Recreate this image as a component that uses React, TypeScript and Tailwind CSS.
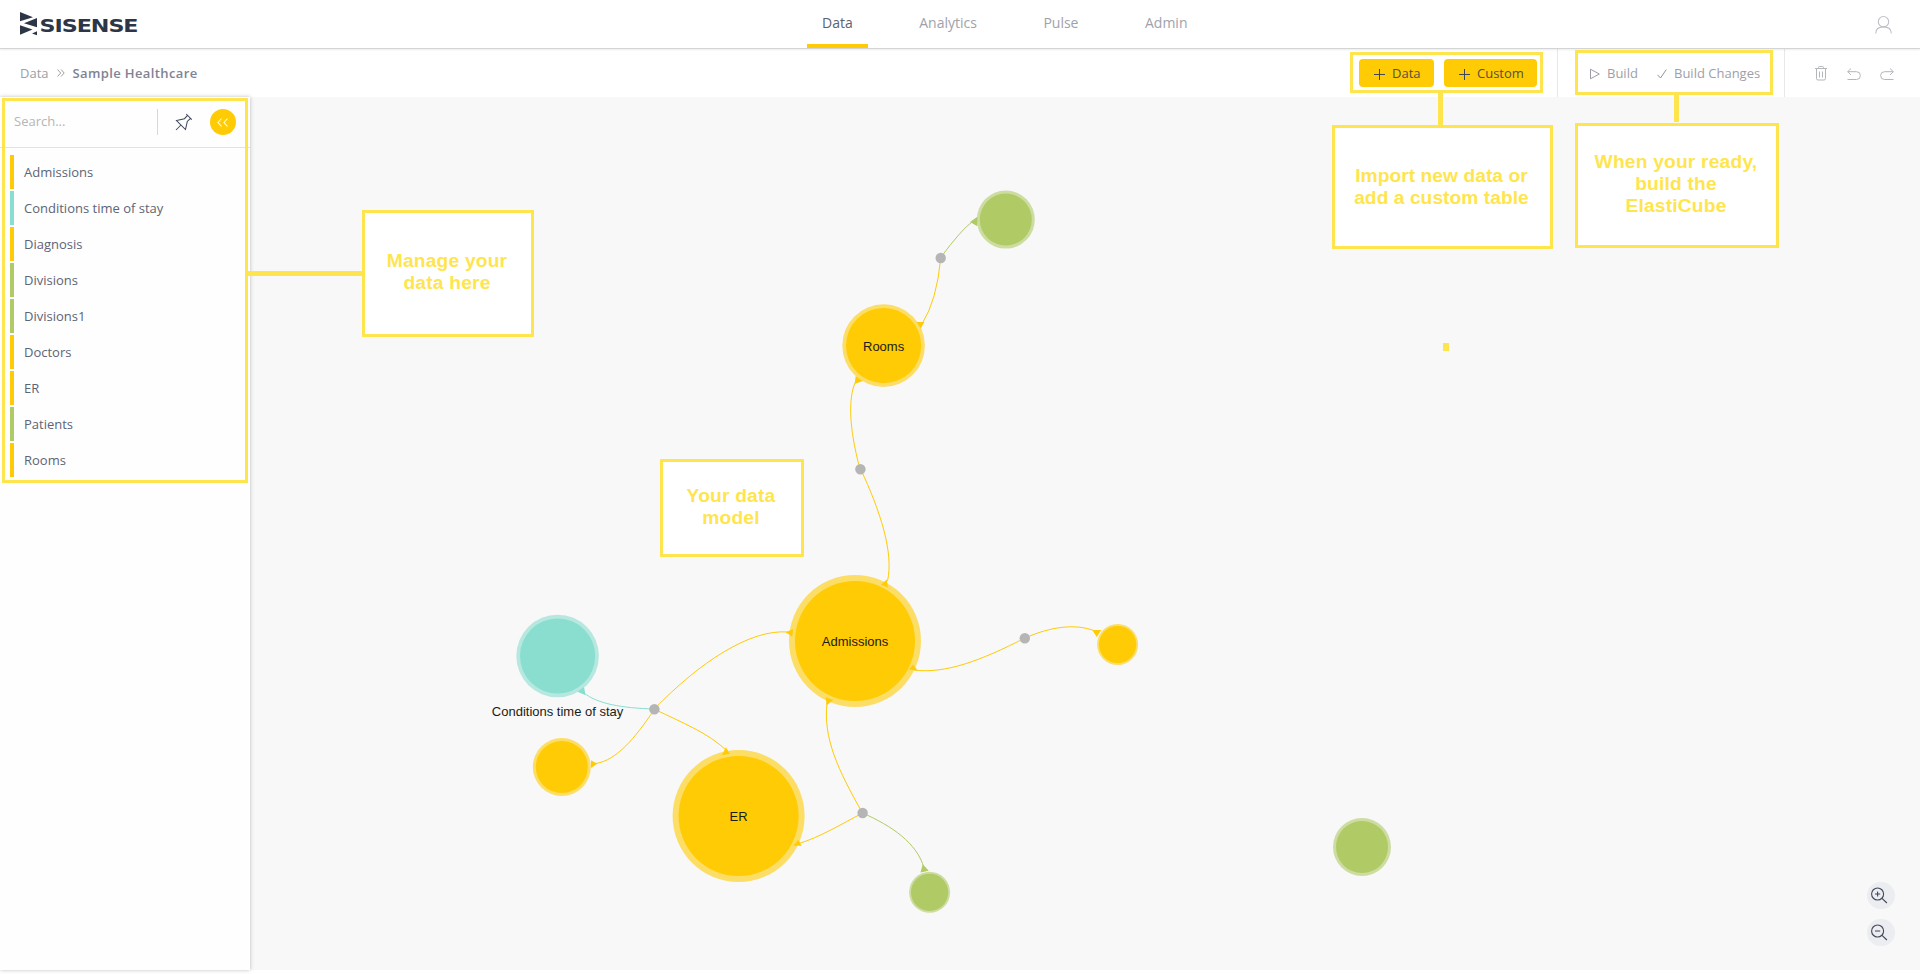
import React from "react";

const YELLOW = "#ffcb05";
const GREEN = "#b0ca65";
const TEAL = "#8adecf";

const tables = [
  { name: "Admissions", bar: "bg-[#ffcb05]" },
  { name: "Conditions time of stay", bar: "bg-[#8adecf]" },
  { name: "Diagnosis", bar: "bg-[#ffcb05]" },
  { name: "Divisions", bar: "bg-[#b0ca65]" },
  { name: "Divisions1", bar: "bg-[#b0ca65]" },
  { name: "Doctors", bar: "bg-[#ffcb05]" },
  { name: "ER", bar: "bg-[#ffcb05]" },
  { name: "Patients", bar: "bg-[#b0ca65]" },
  { name: "Rooms", bar: "bg-[#ffcb05]" },
];

type Node = { x: number; y: number; r: number; inner: number; color: string; label?: string; labelY?: number };

const nodes: Node[] = [
  { x: 1005.8, y: 219.6, r: 29, inner: 26, color: GREEN },
  { x: 883.6, y: 345.6, r: 41.3, inner: 37.6, color: YELLOW, label: "Rooms", labelY: 351 },
  { x: 557.6, y: 656, r: 41.3, inner: 37.6, color: TEAL, label: "Conditions time of stay", labelY: 716 },
  { x: 561.8, y: 767, r: 29, inner: 26, color: YELLOW },
  { x: 738.6, y: 816, r: 66, inner: 60, color: YELLOW, label: "ER", labelY: 821 },
  { x: 855, y: 641, r: 66, inner: 60, color: YELLOW, label: "Admissions", labelY: 646 },
  { x: 1117.6, y: 644.5, r: 20.5, inner: 18.6, color: YELLOW },
  { x: 929.6, y: 892.3, r: 20.5, inner: 18.6, color: GREEN },
  { x: 1362, y: 847, r: 29, inner: 26, color: GREEN },
];

const edges = [
  { d: "M941 257Q962 229 972 222", arrow: "970,222 977.3,216.8 977.3,226.3", color: GREEN },
  { d: "M940.7 258Q937 300 922 324", arrow: "916.5,322 924.3,322 920.8,328.5", color: YELLOW },
  { d: "M855 383C849 397 848 425 860 469", arrow: "855.7,376 862.8,381 854.6,384", color: YELLOW },
  { d: "M860.5 469C880 510 894 553 887.5 581", arrow: "886.7,579.5 881,584.5 888,587.5", color: YELLOW },
  { d: "M1025 638C1050 627 1075 623 1095 631", arrow: "1092.3,630 1101.3,630 1096.7,637", color: YELLOW },
  { d: "M1025 638C980 661 945 674 914 670", arrow: "913,664.5 917.7,670.6 909,669.4", color: YELLOW },
  { d: "M654.3 709C700 662 750 629 788 632", arrow: "785.7,632.2 793.2,629 792.2,636.8", color: YELLOW },
  { d: "M654 709C622 708 598 704 584 693", arrow: "584,687 577.5,691.8 585.5,695.2", color: TEAL },
  { d: "M654 710C635 738 617 760 596 763.5", arrow: "591,760.3 597.3,763.8 591,768", color: YELLOW },
  { d: "M654 709C683 723 708 733 726 750", arrow: "726,747.2 721.8,755.2 729.8,753.7", color: YELLOW },
  { d: "M827 703C823 738 838 770 862.5 813", arrow: "825.6,697.2 833.3,700 826.7,705.2", color: YELLOW },
  { d: "M862.5 813C840 825 820 837 799 843.5", arrow: "798.3,839.8 801.6,845.8 793.4,845.8", color: YELLOW },
  { d: "M862.5 813C892 826 917 843 924 868", arrow: "922.7,864.2 928.8,870.8 920.5,872.4", color: GREEN },
];

const joints = [
  [940.7, 258], [860.4, 469.2], [1024.8, 638.3], [654.4, 709.3], [862.6, 813],
];

function Graph() {
  return (
    <svg className="absolute left-0 top-0" width="1670" height="873" viewBox="250 97 1670 873" fill="none">
      {nodes.map((n, i) => (
        <g key={i}>
          <circle cx={n.x} cy={n.y} r={n.r} fill={n.color} fillOpacity="0.6" />
          <circle cx={n.x} cy={n.y} r={n.inner} fill={n.color} />
        </g>
      ))}
      {edges.map((e, i) => (
        <g key={i}>
          <path d={e.d} stroke={e.color} strokeWidth="1" />
          <polygon points={e.arrow} fill={e.color} />
        </g>
      ))}
      {joints.map(([x, y], i) => (
        <circle key={i} cx={x} cy={y} r="5.2" fill="#b5b5b5" />
      ))}
      {nodes.map((n, i) =>
        n.label ? (
          <text key={i} x={n.x} y={n.labelY} textAnchor="middle" fill="#1c1c10" className="font-['Liberation_Sans',sans-serif] text-[13px]">
            {n.label}
          </text>
        ) : null
      )}
    </svg>
  );
}

function Note({ className, children }: { className: string; children: React.ReactNode }) {
  return (
    <div
      className={`absolute flex items-center justify-center border-3 border-[#ffe54d] bg-white pr-0.5 text-center font-['Liberation_Sans',sans-serif] text-[19.2px] leading-[22px] font-bold text-[#ffe54d] ${className}`}
    >
      {children}
    </div>
  );
}

function ZoomButton({ plus }: { plus?: boolean }) {
  return (
    <button className="flex h-[27px] w-7 items-center rounded-full bg-[#ecedf1] pl-1">
      <svg width="17" height="17" viewBox="0 0 17 17" fill="none" stroke="#3f475a" strokeWidth="1.1">
        <circle cx="6.6" cy="7" r="6" />
        <path d="M11 11.4l4.9 4.6M4 7h5.2" />
        {plus && <path d="M6.6 4.4v5.2" />}
      </svg>
    </button>
  );
}

function Plus() {
  return (
    <svg width="11" height="11" viewBox="0 0 11 11" stroke="#3f4656" className="mt-px">
      <path d="M0 5.5h11M5.5 0v11" />
    </svg>
  );
}

export default function App() {
  return (
    <div className="relative flex h-[974px] w-[1920px] flex-col overflow-hidden bg-white font-['Open_Sans',sans-serif] text-[13px]">
      <header className="relative z-10 flex h-[49px] shrink-0 border-b border-[#d2d4d6] bg-white shadow-[0_1px_2px_rgba(0,0,0,0.08)]">
        <div className="w-[807px] pl-5 pt-3">
          <svg width="118" height="24" viewBox="0 0 118 24" fill="#2c3646">
            <path d="M0 0L13 5.3L0 9.2ZM17 6V15.2L4 11.2ZM0 13.3L12.5 17.6L0 22.8ZM17 19.3V23.3L12 21.5Z" />
            <text x="19.5" y="19.6" textLength="98" lengthAdjust="spacingAndGlyphs" className="font-['DejaVu_Sans',sans-serif] text-[17.5px] font-bold tracking-[-0.8px]">
              SISENSE
            </text>
          </svg>
        </div>
        <nav className="flex gap-[36.5px] text-[14px] leading-[19px] text-[#a0a2ab]">
          <a className="h-12 border-b-4 border-[#ffcb05] px-[15px] pt-[13px] text-[#5b6172]">Data</a>
          <a className="px-[15px] pt-[13px]">Analytics</a>
          <a className="px-[15px] pt-[13px]">Pulse</a>
          <a className="px-[15px] pt-[13px]">Admin</a>
        </nav>
        <div className="ml-auto mr-7 pt-[15px]">
          <svg width="18" height="19" viewBox="0 0 18 19" fill="none" stroke="#bfc1c8" strokeWidth="1.1">
            <circle cx="9.5" cy="6.7" r="5.2" />
            <path d="M1.7 18.5c0-4 3-6.6 7.8-6.6s7.8 2.6 7.8 6.6" />
          </svg>
        </div>
      </header>

      <div className="flex h-12 shrink-0 items-center">
        <div className="flex items-center pl-5 text-[#9c9ea7]">
          <span className="leading-[18px]">Data</span>
          <svg width="8" height="8" viewBox="0 0 8 8" fill="none" stroke="#9c9ea7" className="ml-2 mr-2">
            <path d="M0.5 0.5L3.7 4L0.5 7.5M4 0.5L7.2 4L4 7.5" />
          </svg>
          <span className="leading-[18px] font-semibold tracking-[0.38px] text-[#7e8495]">Sample Healthcare</span>
        </div>
        <div className="ml-auto flex h-full items-center">
          <button className="flex h-7 w-[75px] items-center gap-[7px] rounded bg-[#ffcb05] pl-[15px] pt-px text-[#55503f]">
            <Plus />
            Data
          </button>
          <button className="ml-2.5 flex h-7 w-[93px] items-center gap-[7px] rounded bg-[#ffcb05] pl-[15px] pt-px text-[#55503f]">
            <Plus />
            Custom
          </button>
          <div className="ml-5 h-full w-px bg-[#e8e8ea]" />
          <div className="flex w-[226px] items-center pl-8 pt-px text-[#9ea0a8]">
            <svg width="10" height="12" viewBox="0 0 10 12" fill="none" stroke="#9a9da8">
              <path d="M0.5 1.2L9.3 6L0.5 10.8Z" strokeLinejoin="round" />
            </svg>
            <span className="ml-[7px] w-[50px]">Build</span>
            <svg width="10" height="10" viewBox="0 0 10 10" fill="none" stroke="#8f929e">
              <path d="M0.5 5.8L3.5 9L9.3 0.6" />
            </svg>
            <span className="ml-[7px] whitespace-nowrap">Build Changes</span>
          </div>
          <div className="h-full w-px bg-[#e8e8ea]" />
          <div className="flex w-[135px] items-center gap-5 pl-[30px] pt-px">
            <svg width="12" height="15" viewBox="0 0 12 15" fill="none" stroke="#b4b6be">
              <path d="M0 2.5h12M3.5 2.5V1.5q0-1 1-1h3q1 0 1 1v1M1.5 2.5v10q0 1.5 1.5 1.5h6q1.5 0 1.5-1.5v-10M4.5 5.5v6M7.5 5.5v6" />
            </svg>
            <svg width="14" height="12" viewBox="0 0 14 12" fill="none" stroke="#b4b6be" className="mt-px">
              <path d="M4 0.5L0.7 3.7L4 7M0.7 3.7H9.5a3.9 3.9 0 0 1 0 7.8H0.5" />
            </svg>
            <svg width="14" height="12" viewBox="0 0 14 12" fill="none" stroke="#b4b6be" className="-ml-px mt-px">
              <path d="M10 0.5L13.3 3.7L10 7M13.3 3.7H4.5a3.9 3.9 0 0 0 0 7.8H13.5" />
            </svg>
          </div>
        </div>
      </div>

      <main className="flex h-[873px]">
        <aside className="relative z-10 w-[250px] shrink-0 bg-[#fefefe] shadow-[0_0_4px_rgba(0,0,0,0.25)]">
          <div className="flex h-[51px] items-center border-b border-[#e2e2e2]">
            <input
              placeholder="Search..."
              className="h-[26px] w-[158px] border-r border-[#d8d8d8] bg-transparent pb-0.5 pl-3.5 leading-[18px] outline-none placeholder:text-[#b5b5b5]"
            />
            <svg width="18" height="18" viewBox="0 0 18 18" fill="none" stroke="#3f475a" strokeWidth="1.05" className="ml-[17px]">
              <path d="M11.2 1L16.8 6.6M12.5 2.3L9.5 5.7L1.5 7.5L10.5 16.5L12.3 8.5L15.5 5.3M6 12L1 17" />
            </svg>
            <button className="ml-[17px] flex size-[26px] items-center justify-center rounded-full bg-[#ffcb05]">
              <svg width="12" height="9" viewBox="0 0 12 9" fill="none" stroke="#fff" strokeWidth="1.1">
                <path d="M4.5 0.5L1 4.5L4.5 8.5M10.5 0.5L7 4.5L10.5 8.5" />
              </svg>
            </button>
          </div>
          <ul className="flex flex-col gap-0.5 pl-2.5 pt-[7px]">
            {tables.map((t) => (
              <li key={t.name} className="flex h-[34px] gap-2.5 text-[#5d6475]">
                <span className={`h-full w-1 ${t.bar}`} />
                <span className="pt-[7px] leading-5">{t.name}</span>
              </li>
            ))}
          </ul>
          <div className="absolute left-0.5 top-px h-[385px] w-[246px] border-3 border-[#ffe54d]" />
          <div className="absolute left-[248px] top-[174px] h-[5px] w-[114px] bg-[#ffe54d]" />
        </aside>

        <section className="relative flex-1 bg-[#f8f8f8]">
          <Graph />
          <Note className="left-[112px] top-[113px] h-[127px] w-[172px] pb-[3px] tracking-[0.2px]">
            Manage your
            <br />
            data here
          </Note>
          <Note className="left-[410px] top-[362px] h-[98px] w-[144px] pb-0.5 tracking-[0.2px]">
            Your data
            <br />
            model
          </Note>
          <Note className="left-[1082px] top-7 h-[124px] w-[221px] tracking-[0.05px]">
            Import new data or
            <br />
            add a custom table
          </Note>
          <Note className="left-[1325px] top-[26px] h-[125px] w-[204px] pb-[3px] tracking-[0.2px]">
            When your ready,
            <br />
            build the
            <br />
            ElastiCube
          </Note>
          <div className="absolute left-[1193px] top-[246px] h-2 w-1.5 bg-[#ffe54d]" />
          <div className="absolute right-[25px] top-[785px] flex flex-col gap-2.5">
            <ZoomButton plus />
            <ZoomButton />
          </div>
        </section>
      </main>

      <div className="absolute left-[1350px] top-[52px] z-20 h-[41px] w-[193px] border-3 border-[#ffe54d]" />
      <div className="absolute left-[1438px] top-[92px] z-20 h-[34px] w-[5px] bg-[#ffe54d]" />
      <div className="absolute left-[1575px] top-[50px] z-20 h-[45px] w-[198px] border-3 border-[#ffe54d]" />
      <div className="absolute left-[1674px] top-[94px] z-20 h-7 w-[5px] bg-[#ffe54d]" />
    </div>
  );
}
